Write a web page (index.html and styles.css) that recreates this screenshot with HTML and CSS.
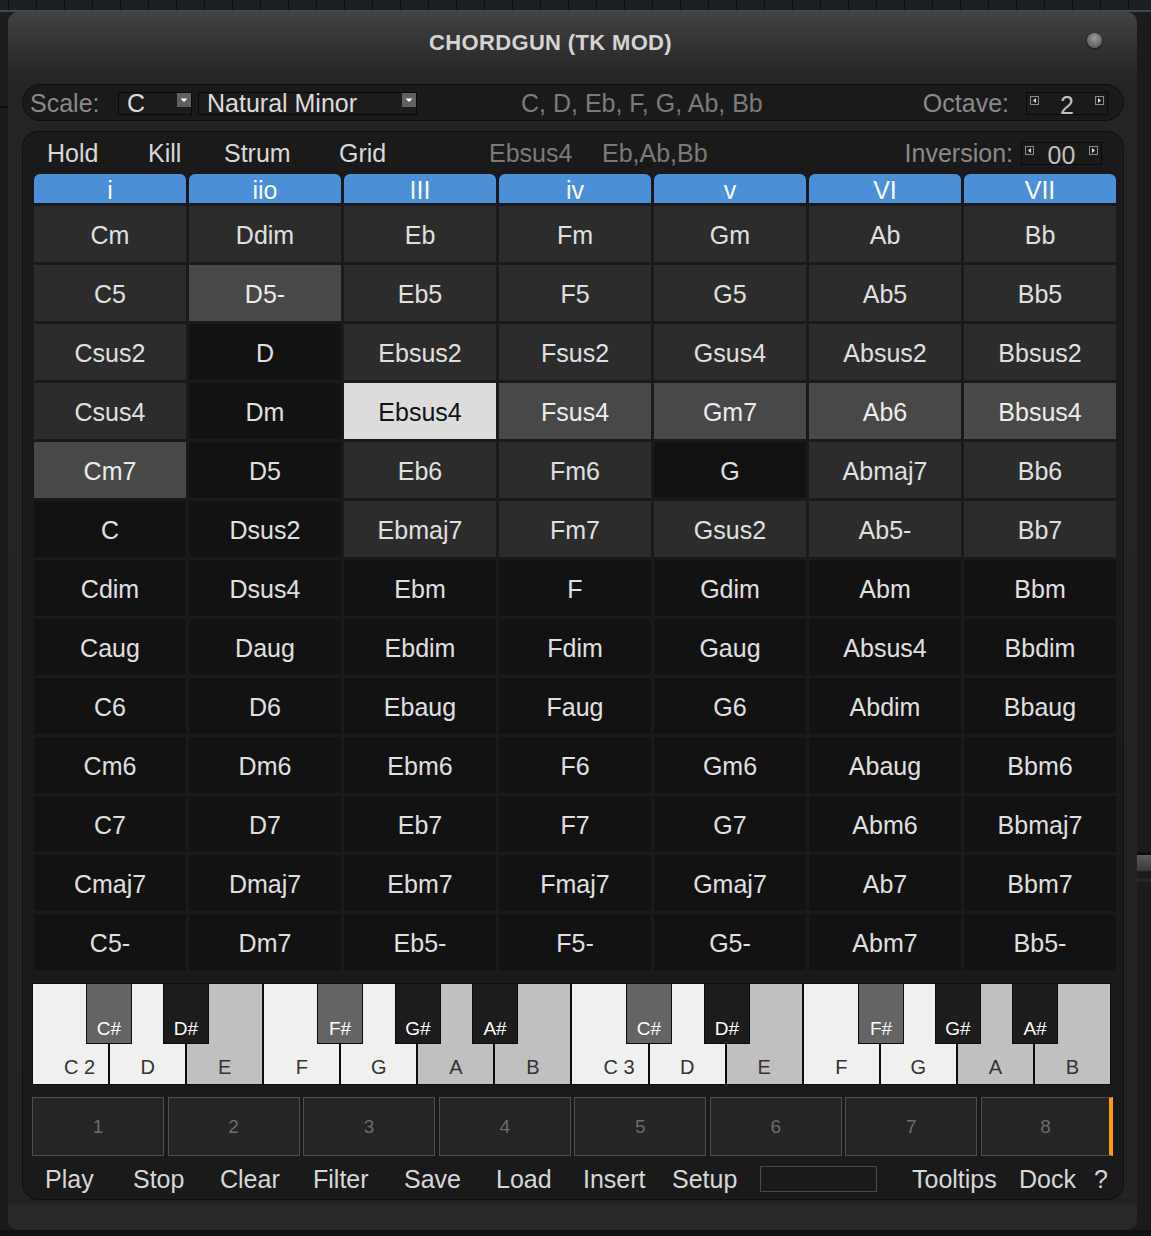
FILE: index.html
```html
<!DOCTYPE html>
<html>
<head>
<meta charset="utf-8">
<title>ChordGun (TK Mod)</title>
<link rel="stylesheet" href="styles.css">
</head>
<body>
<div class="topstrip"></div>
<div class="stage">
  <div class="leftstrip"></div>
  <div class="window">
    <div class="titlebar">
      <h1 class="title">CHORDGUN (TK MOD)</h1>
      <span class="led"></span>
    </div>

    <div class="scalebar">
      <span class="lbl lbl-scale">Scale:</span>
      <div class="dd dd-key"><span class="dd-text">C</span><svg class="dd-arrow" width="14" height="14" viewBox="0 0 14 14"><rect width="14" height="14" fill="#5d625f"/><path d="M3.5 5.5h7l-3.5 3.5z" fill="#fff"/></svg></div>
      <div class="dd dd-mode"><span class="dd-text">Natural Minor</span><svg class="dd-arrow" width="14" height="14" viewBox="0 0 14 14"><rect width="14" height="14" fill="#5d625f"/><path d="M3.5 5.5h7l-3.5 3.5z" fill="#fff"/></svg></div>
      <span class="notes">C, D, Eb, F, G, Ab, Bb</span>
      <span class="lbl">Octave:</span>
      <div class="spin spin-oct">
        <svg class="spin-btn" width="9" height="9" viewBox="0 0 9 9"><rect x="0.5" y="0.5" width="8" height="8" fill="#1c1c1c" stroke="#8a8a8a"/><path d="M6 2L3 4.5 6 7z" fill="#e0e0e0"/></svg>
        <span class="spin-val">2</span>
        <svg class="spin-btn" width="9" height="9" viewBox="0 0 9 9"><rect x="0.5" y="0.5" width="8" height="8" fill="#1c1c1c" stroke="#8a8a8a"/><path d="M3 2L6 4.5 3 7z" fill="#e0e0e0"/></svg>
      </div>
    </div>

    <div class="panel">
      <div class="toprow">
        <span class="tb w-hold">Hold</span>
        <span class="tb w-kill">Kill</span>
        <span class="tb w-strum">Strum</span>
        <span class="tb w-grid">Grid</span>
        <span class="info w-chord">Ebsus4</span>
        <span class="info w-notes">Eb,Ab,Bb</span>
        <span class="lbl">Inversion:</span>
        <div class="spin spin-inv">
          <svg class="spin-btn" width="9" height="9" viewBox="0 0 9 9"><rect x="0.5" y="0.5" width="8" height="8" fill="#1c1c1c" stroke="#8a8a8a"/><path d="M6 2L3 4.5 6 7z" fill="#e0e0e0"/></svg>
          <span class="spin-val">00</span>
          <svg class="spin-btn" width="9" height="9" viewBox="0 0 9 9"><rect x="0.5" y="0.5" width="8" height="8" fill="#1c1c1c" stroke="#8a8a8a"/><path d="M3 2L6 4.5 3 7z" fill="#e0e0e0"/></svg>
        </div>
      </div>

      <div class="grid">
        <div class="hd">i</div><div class="hd">iio</div><div class="hd">III</div><div class="hd">iv</div><div class="hd">v</div><div class="hd">VI</div><div class="hd">VII</div>

        <div class="c">Cm</div><div class="c">Ddim</div><div class="c">Eb</div><div class="c">Fm</div><div class="c">Gm</div><div class="c">Ab</div><div class="c">Bb</div>
        <div class="c">C5</div><div class="c h">D5-</div><div class="c">Eb5</div><div class="c">F5</div><div class="c">G5</div><div class="c">Ab5</div><div class="c">Bb5</div>
        <div class="c">Csus2</div><div class="c d">D</div><div class="c">Ebsus2</div><div class="c">Fsus2</div><div class="c">Gsus4</div><div class="c">Absus2</div><div class="c">Bbsus2</div>
        <div class="c">Csus4</div><div class="c d">Dm</div><div class="c s">Ebsus4</div><div class="c h">Fsus4</div><div class="c h">Gm7</div><div class="c h">Ab6</div><div class="c h">Bbsus4</div>
        <div class="c h">Cm7</div><div class="c d">D5</div><div class="c">Eb6</div><div class="c">Fm6</div><div class="c d">G</div><div class="c">Abmaj7</div><div class="c">Bb6</div>
        <div class="c d">C</div><div class="c d">Dsus2</div><div class="c">Ebmaj7</div><div class="c">Fm7</div><div class="c">Gsus2</div><div class="c">Ab5-</div><div class="c">Bb7</div>
        <div class="c d">Cdim</div><div class="c d">Dsus4</div><div class="c d">Ebm</div><div class="c d">F</div><div class="c d">Gdim</div><div class="c d">Abm</div><div class="c d">Bbm</div>
        <div class="c d">Caug</div><div class="c d">Daug</div><div class="c d">Ebdim</div><div class="c d">Fdim</div><div class="c d">Gaug</div><div class="c d">Absus4</div><div class="c d">Bbdim</div>
        <div class="c d">C6</div><div class="c d">D6</div><div class="c d">Ebaug</div><div class="c d">Faug</div><div class="c d">G6</div><div class="c d">Abdim</div><div class="c d">Bbaug</div>
        <div class="c d">Cm6</div><div class="c d">Dm6</div><div class="c d">Ebm6</div><div class="c d">F6</div><div class="c d">Gm6</div><div class="c d">Abaug</div><div class="c d">Bbm6</div>
        <div class="c d">C7</div><div class="c d">D7</div><div class="c d">Eb7</div><div class="c d">F7</div><div class="c d">G7</div><div class="c d">Abm6</div><div class="c d">Bbmaj7</div>
        <div class="c d">Cmaj7</div><div class="c d">Dmaj7</div><div class="c d">Ebm7</div><div class="c d">Fmaj7</div><div class="c d">Gmaj7</div><div class="c d">Ab7</div><div class="c d">Bbm7</div>
        <div class="c d">C5-</div><div class="c d">Dm7</div><div class="c d">Eb5-</div><div class="c d">F5-</div><div class="c d">G5-</div><div class="c d">Abm7</div><div class="c d">Bb5-</div>
      </div>

      <div class="piano">
        <div class="wk on lc">C 2</div><div class="wk on">D</div><div class="wk off">E</div><div class="wk on">F</div><div class="wk on">G</div><div class="wk off">A</div><div class="wk off">B</div>
        <div class="wk on lc">C 3</div><div class="wk on">D</div><div class="wk off">E</div><div class="wk on">F</div><div class="wk on">G</div><div class="wk off">A</div><div class="wk off">B</div>

        <div class="bk grey" style="left:54px">C#</div>
        <div class="bk" style="left:131px">D#</div>
        <div class="bk grey" style="left:285px">F#</div>
        <div class="bk" style="left:363px">G#</div>
        <div class="bk" style="left:440px">A#</div>
        <div class="bk grey" style="left:594px">C#</div>
        <div class="bk" style="left:672px">D#</div>
        <div class="bk grey" style="left:826px">F#</div>
        <div class="bk" style="left:903px">G#</div>
        <div class="bk" style="left:980px">A#</div>
      </div>

      <div class="pads">
        <div class="pad">1</div><div class="pad">2</div><div class="pad">3</div><div class="pad">4</div>
        <div class="pad">5</div><div class="pad">6</div><div class="pad">7</div><div class="pad active">8</div>
      </div>

      <div class="bottomrow">
        <span class="tb b-play">Play</span>
        <span class="tb b-stop">Stop</span>
        <span class="tb b-clear">Clear</span>
        <span class="tb b-filter">Filter</span>
        <span class="tb b-save">Save</span>
        <span class="tb b-load">Load</span>
        <span class="tb b-insert">Insert</span>
        <span class="tb b-setup">Setup</span>
        <span class="field"></span>
        <span class="tb b-tips">Tooltips</span>
        <span class="tb b-dock">Dock</span>
        <span class="tb">?</span>
      </div>
    </div>
  </div>
  <div class="rightstrip"></div>
</div>
<div class="bottomstrip"></div>
</body>
</html>
```

FILE: styles.css
```css
* { box-sizing: border-box; }
html, body { margin: 0; padding: 0; }
body {
  width: 1151px;
  height: 1236px;
  overflow: hidden;
  background: #141414;
  font-family: "Liberation Sans", Arial, sans-serif;
  font-size: 25px;
  color: #d8d8d8;
}

.topstrip {
  height: 12px;
  background:
    linear-gradient(to bottom, transparent 0, transparent 10px, #3a4a5b 10px, #3a4a5b 12px),
    repeating-linear-gradient(to right, #1f1f1f 0, #1f1f1f 8px, #0e0e0e 8px, #0e0e0e 9px, #1f1f1f 9px, #1f1f1f 28px);
}

.stage { display: flex; height: 1218px; background: #1b1b1b; }
.leftstrip {
  width: 8px;
  background: linear-gradient(to bottom, #1d1d1d 0, #1d1d1d 94px, #0c0c0c 94px, #0c0c0c 96px, #1a1a1a 96px);
}
.rightstrip {
  width: 14px;
  background: linear-gradient(to bottom, #1b1b1b 0, #1b1b1b 840px, #0f0f0f 840px, #0f0f0f 843px, #5c5c5c 843px, #3c3c3c 858px, #1a1a1a 860px, #1a1a1a 866px, #262626 866px, #262626 870px, #1b1b1b 870px);
}
.bottomstrip { height: 6px; background: #111; }

.window {
  width: 1129px;
  height: 1218px;
  border-radius: 10px;
  padding: 0 13px 0 14px;
  background: linear-gradient(to bottom, #424242 0, #343434 30px, #282828 58px, #242424 80px, #232323 1186px, #1f1f1f 1188px, #292929 1196px, #282828 1218px);
}

.titlebar { display: flex; align-items: center; height: 62px; margin-bottom: 10px; }
.title {
  margin: 0 0 0 407px;
  font-size: 22px;
  font-weight: bold;
  color: #d4d4d4;
  letter-spacing: 0.35px;
}
.led {
  margin-left: auto;
  margin-right: 22px;
  align-self: flex-start;
  margin-top: 21px;
  width: 15px;
  height: 15px;
  border-radius: 50%;
  background: radial-gradient(circle at 50% 35%, #9a9a9a 0, #7a7a7a 40%, #4e4e4e 100%);
  box-shadow: 0 1px 2px rgba(0,0,0,0.6);
}

/* scale bar */
.scalebar {
  display: flex;
  align-items: center;
  width: 1102px;
  height: 37px;
  border: 1px solid #0e0e0e;
  border-radius: 19px;
  background: #1a1a1a;
  padding: 1px 15px 0 7px;
}
.lbl { color: #8a8a8a; }
.lbl-scale { width: 88px; }
.dd {
  display: flex;
  height: 23px;
  border: 1px solid #0a0a0a;
  background: #1c1c1c;
  line-height: 21px;
}
.dd-text { padding-left: 8px; color: #dcdcdc; }
.dd-arrow { margin-left: auto; flex: none; }
.dd-key { width: 74px; margin-right: 6px; }
.dd-mode { width: 219px; }
.notes { flex: 1; margin-left: 104px; color: #7b7b7b; }

.spin {
  display: flex;
  align-items: flex-start;
  height: 23px;
  border: 1px solid #0a0a0a;
  padding: 3px 3px 0 3px;
}
.spin-btn { flex: none; }
.spin-val { flex: 1; text-align: center; line-height: 19px; color: #c0c0c0; }
.spin-oct { width: 82px; margin-left: 17px; }
.spin-inv { width: 81px; margin-left: 8px; margin-right: 14px; }

/* main panel */
.panel {
  margin-top: 10px;
  width: 1102px;
  height: 1069px;
  border: 1px solid #0e0e0e;
  border-radius: 16px;
  background: #1a1a1a;
  padding: 0 7px 0 11px;
}

.toprow { display: flex; align-items: center; height: 42px; margin-left: 13px; }
.tb { color: #d8d8d8; }
.info { color: #7a7a7a; }
.w-hold { width: 101px; }
.w-kill { width: 76px; }
.w-strum { width: 115px; }
.w-grid { width: 150px; }
.w-chord { width: 113px; }
.w-notes { flex: 1; }

.grid {
  display: grid;
  grid-template-columns: repeat(7, 152px);
  grid-template-rows: 29px repeat(13, 56px);
  gap: 3px;
}
.hd {
  background: #4a8fd8;
  border-radius: 6px 6px 0 0;
  color: #fff;
  text-align: center;
  line-height: 33px;
}
.c {
  display: flex;
  align-items: center;
  justify-content: center;
  padding-top: 2px;
  background: #2c2c2c;
  color: #e0e0e0;
}
.c.d { background: #121212; }
.c.h { background: #484848; color: #ececec; }
.c.s { background: #dcdcdc; color: #121212; }

/* piano */
.piano {
  position: relative;
  display: grid;
  grid-template-columns: repeat(14, 1fr);
  gap: 2px;
  width: 1079px;
  height: 102px;
  margin: 13px 0 0 -2px;
  padding: 1px;
  background: #0c0c0c;
}
.wk {
  display: flex;
  align-items: flex-end;
  justify-content: center;
  padding-bottom: 7px;
  font-size: 20px;
  line-height: 20px;
  color: #333;
}
.wk.on { background: #f0f0f0; }
.wk.off { background: #c0c0c0; }
.wk.lc { padding-left: 18px; }
.bk {
  position: absolute;
  top: 0;
  width: 46px;
  height: 61px;
  border: 1px solid #0c0c0c;
  background: #1c1c1c;
  color: #fff;
  font-size: 19px;
  line-height: 19px;
  display: flex;
  align-items: flex-end;
  justify-content: center;
  padding-bottom: 5px;
}
.bk.grey { background: #646464; }

/* pads */
.pads {
  display: grid;
  grid-template-columns: repeat(8, 1fr);
  gap: 3.5px;
  width: 1081px;
  height: 59px;
  margin: 12px 0 0 -2px;
}
.pad {
  display: flex;
  align-items: center;
  justify-content: center;
  border: 1px solid #4e4e4e;
  background: #252525;
  color: #6c6c6c;
  font-size: 19px;
}
.pad.active { border-right: 4px solid #ff9c00; }

/* bottom row */
.bottomrow { display: flex; align-items: center; height: 43px; margin-left: 11px; padding-top: 3px; }
.b-play { width: 88px; }
.b-stop { width: 87px; }
.b-clear { width: 93px; }
.b-filter { width: 91px; }
.b-save { width: 92px; }
.b-load { width: 87px; }
.b-insert { width: 89px; }
.b-setup { width: 88px; }
.field {
  width: 117px;
  height: 26px;
  border: 1px solid #4a4a4a;
  background: #1a1a1a;
  margin-right: 35px;
}
.b-tips { width: 107px; }
.b-dock { width: 75px; }
```
